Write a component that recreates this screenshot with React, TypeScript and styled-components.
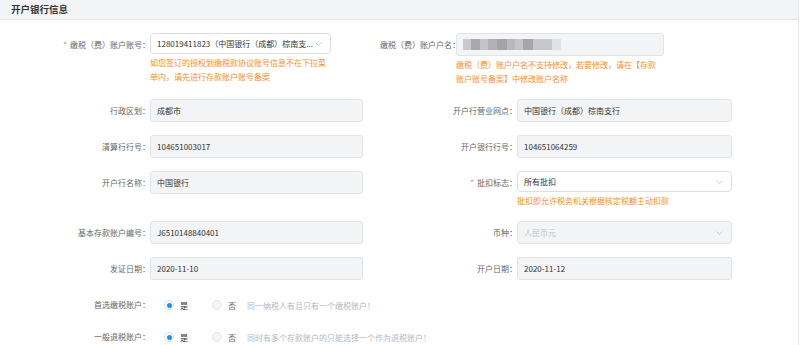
import styled, { createGlobalStyle } from "styled-components";

const GlobalStyle = createGlobalStyle`
  html, body {
    margin: 0;
    padding: 0;
    background: #fff;
  }
  body {
    font-family: "Noto Sans CJK SC", "Noto Sans", sans-serif;
    color: #333;
  }
  * {
    box-sizing: border-box;
  }
`;

const Page = styled.div`
  width: 799px;
  height: 345px;
  border-right: 1px solid #e6e6e6;
  overflow: hidden;
`;

const Header = styled.div`
  height: 20px;
  display: flex;
  align-items: center;
  padding-left: 11px;
  background: #f3f4f6;
  border-bottom: 1px solid #e2e4e8;
`;

const Title = styled.h2`
  margin: 0;
  font-size: 9.5px;
  line-height: 1;
  font-weight: 700;
  color: #333;
`;

const Form = styled.div`
  padding-top: 13px;
`;

const Row = styled.div<{ $gap?: number }>`
  display: grid;
  grid-template-columns: 380px 1fr;
  align-items: start;
  margin-bottom: ${(p) => p.$gap ?? 13}px;
`;

const Item = styled.div`
  display: flex;
  align-items: flex-start;
`;

const Label = styled.label<{ $width: number; $height?: number }>`
  flex: none;
  width: ${(p) => p.$width}px;
  height: ${(p) => p.$height ?? 23}px;
  line-height: ${(p) => p.$height ?? 23}px;
  text-align: right;
  font-size: 8px;
  color: #666;
  white-space: nowrap;
`;

const Star = styled.span`
  color: #f56c6c;
  margin-right: 3px;
`;

const Field = styled.div<{ $width: number }>`
  display: flex;
  flex-direction: column;
  width: ${(p) => p.$width}px;
`;

const ReadOnlyBox = styled.div`
  height: 23px;
  display: flex;
  align-items: center;
  padding: 0 6px;
  font-size: 8px;
  color: #333;
  background: #f3f4f6;
  border: 1px solid #e1e3e8;
  border-radius: 3px;
  white-space: nowrap;
`;

const SelectBox = styled.div<{ $disabled?: boolean }>`
  height: ${(p) => (p.$disabled ? 23 : 21)}px;
  display: flex;
  align-items: center;
  justify-content: space-between;
  padding: 0 8px 0 6px;
  font-size: 8px;
  color: ${(p) => (p.$disabled ? "#c0c4cc" : "#333")};
  background: ${(p) => (p.$disabled ? "#f3f4f6" : "#fff")};
  border: 1px solid ${(p) => (p.$disabled ? "#e1e3e8" : "#dcdfe6")};
  border-radius: 4px;
  white-space: nowrap;
`;

const Hint = styled.div<{ $gap?: number }>`
  margin-top: ${(p) => p.$gap ?? 0}px;
  font-size: 8px;
  line-height: 14px;
  color: #ff8c1a;
  white-space: nowrap;
`;

const RadioGroup = styled.div`
  height: 24px;
  display: flex;
  align-items: center;
  padding-left: 14px;
  font-size: 8px;
  white-space: nowrap;
`;

const Option = styled.span<{ $space: number; $disabled?: boolean }>`
  display: flex;
  align-items: center;
  gap: 6px;
  margin-right: ${(p) => p.$space}px;
  color: ${(p) => (p.$disabled ? "#606266" : "#333")};
`;

const Dot = styled.span<{ $checked?: boolean }>`
  width: 10px;
  height: 10px;
  border-radius: 50%;
  display: grid;
  place-items: center;
  background: ${(p) => (p.$checked ? "#fff" : "#f3f4f6")};
  border: 1px solid ${(p) => (p.$checked ? "#d6dbe3" : "#e4e7ed")};

  &::after {
    content: "";
    width: 5px;
    height: 5px;
    border-radius: 50%;
    background: ${(p) => (p.$checked ? "#1890ff" : "transparent")};
  }
`;

const Note = styled.span`
  color: #b4b8bf;
`;

const Chevron = () => (
  <svg width="7" height="4" viewBox="0 0 7 4" fill="none">
    <polyline points="0.5,0.5 3.5,3.5 6.5,0.5" stroke="#c0c4cc" strokeWidth="0.9" />
  </svg>
);

const mosaic = [
  { w: 8, c: "#c9c9cb" },
  { w: 9, c: "#a9a9ab" },
  { w: 8, c: "#c3c3c5" },
  { w: 9, c: "#b1b1b3" },
  { w: 10, c: "#a3a3a5" },
  { w: 8, c: "#b9b9bb" },
  { w: 8, c: "#c6c6c8" },
  { w: 10, c: "#a6a6a8" },
  { w: 19, c: "#c8c8ca" },
  { w: 9, c: "#e1e2e4" },
];

const Mosaic = () => {
  let x = 0;
  return (
    <svg width="98" height="11" viewBox="0 0 98 11">
      {mosaic.map((m, i) => {
        const r = <rect key={i} x={x} y={0} width={m.w} height={11} fill={m.c} />;
        x += m.w;
        return r;
      })}
    </svg>
  );
};

export default function App() {
  return (
    <>
      <GlobalStyle />
      <Page>
        <Header>
          <Title>开户银行信息</Title>
        </Header>
        <Form>
          <Row>
            <Item>
              <Label $width={150}>
                <Star>*</Star>缴税（费）账户账号：
              </Label>
              <Field $width={181}>
                <SelectBox>
                  <span>128019411823（中国银行（成都）棕南支...</span>
                  <Chevron />
                </SelectBox>
                <Hint $gap={2}>
                  如您签订的授权划缴税款协议账号信息不在下拉菜
                  <br />
                  单内，请先进行存款账户账号备案
                </Hint>
              </Field>
            </Item>
            <Item>
              <Label $width={76}>缴税（费）账户户名：</Label>
              <Field $width={208}>
                <ReadOnlyBox>
                  <Mosaic />
                </ReadOnlyBox>
                <Hint $gap={2}>
                  缴税（费）账户户名不支持修改，若要修改，请在【存款
                  <br />
                  账户账号备案】中修改账户名称
                </Hint>
              </Field>
            </Item>
          </Row>

          <Row>
            <Item>
              <Label $width={150}>行政区划：</Label>
              <Field $width={213}>
                <ReadOnlyBox>成都市</ReadOnlyBox>
              </Field>
            </Item>
            <Item>
              <Label $width={137}>开户行营业网点：</Label>
              <Field $width={215}>
                <ReadOnlyBox>中国银行（成都）棕南支行</ReadOnlyBox>
              </Field>
            </Item>
          </Row>

          <Row>
            <Item>
              <Label $width={150}>清算行行号：</Label>
              <Field $width={213}>
                <ReadOnlyBox>104651003017</ReadOnlyBox>
              </Field>
            </Item>
            <Item>
              <Label $width={137}>开户银行行号：</Label>
              <Field $width={215}>
                <ReadOnlyBox>104651064259</ReadOnlyBox>
              </Field>
            </Item>
          </Row>

          <Row>
            <Item>
              <Label $width={150}>开户行名称：</Label>
              <Field $width={213}>
                <ReadOnlyBox>中国银行</ReadOnlyBox>
              </Field>
            </Item>
            <Item>
              <Label $width={137}>
                <Star>*</Star>批扣标志：
              </Label>
              <Field $width={215}>
                <SelectBox>
                  <span>所有批扣</span>
                  <Chevron />
                </SelectBox>
                <Hint $gap={2}>批扣即允许税务机关根据核定税额主动扣款</Hint>
              </Field>
            </Item>
          </Row>

          <Row>
            <Item>
              <Label $width={150}>基本存款账户编号：</Label>
              <Field $width={213}>
                <ReadOnlyBox>J6510148840401</ReadOnlyBox>
              </Field>
            </Item>
            <Item>
              <Label $width={137}>币种：</Label>
              <Field $width={215}>
                <SelectBox $disabled>
                  <span>人民币元</span>
                  <Chevron />
                </SelectBox>
              </Field>
            </Item>
          </Row>

          <Row>
            <Item>
              <Label $width={150}>发证日期：</Label>
              <Field $width={213}>
                <ReadOnlyBox>2020-11-10</ReadOnlyBox>
              </Field>
            </Item>
            <Item>
              <Label $width={137}>开户日期：</Label>
              <Field $width={215}>
                <ReadOnlyBox>2020-11-12</ReadOnlyBox>
              </Field>
            </Item>
          </Row>

          <Row $gap={8}>
            <Item>
              <Label $width={150} $height={24}>首选缴税账户：</Label>
              <RadioGroup>
                <Option $space={24}>
                  <Dot $checked />是
                </Option>
                <Option $space={11} $disabled>
                  <Dot />否
                </Option>
                <Note>同一纳税人有且只有一个缴税账户！</Note>
              </RadioGroup>
            </Item>
          </Row>

          <Row $gap={8}>
            <Item>
              <Label $width={150} $height={24}>一般退税账户：</Label>
              <RadioGroup>
                <Option $space={24}>
                  <Dot $checked />是
                </Option>
                <Option $space={11} $disabled>
                  <Dot />否
                </Option>
                <Note>同时有多个存款账户的只能选择一个作为退税账户！</Note>
              </RadioGroup>
            </Item>
          </Row>
        </Form>
      </Page>
    </>
  );
}
